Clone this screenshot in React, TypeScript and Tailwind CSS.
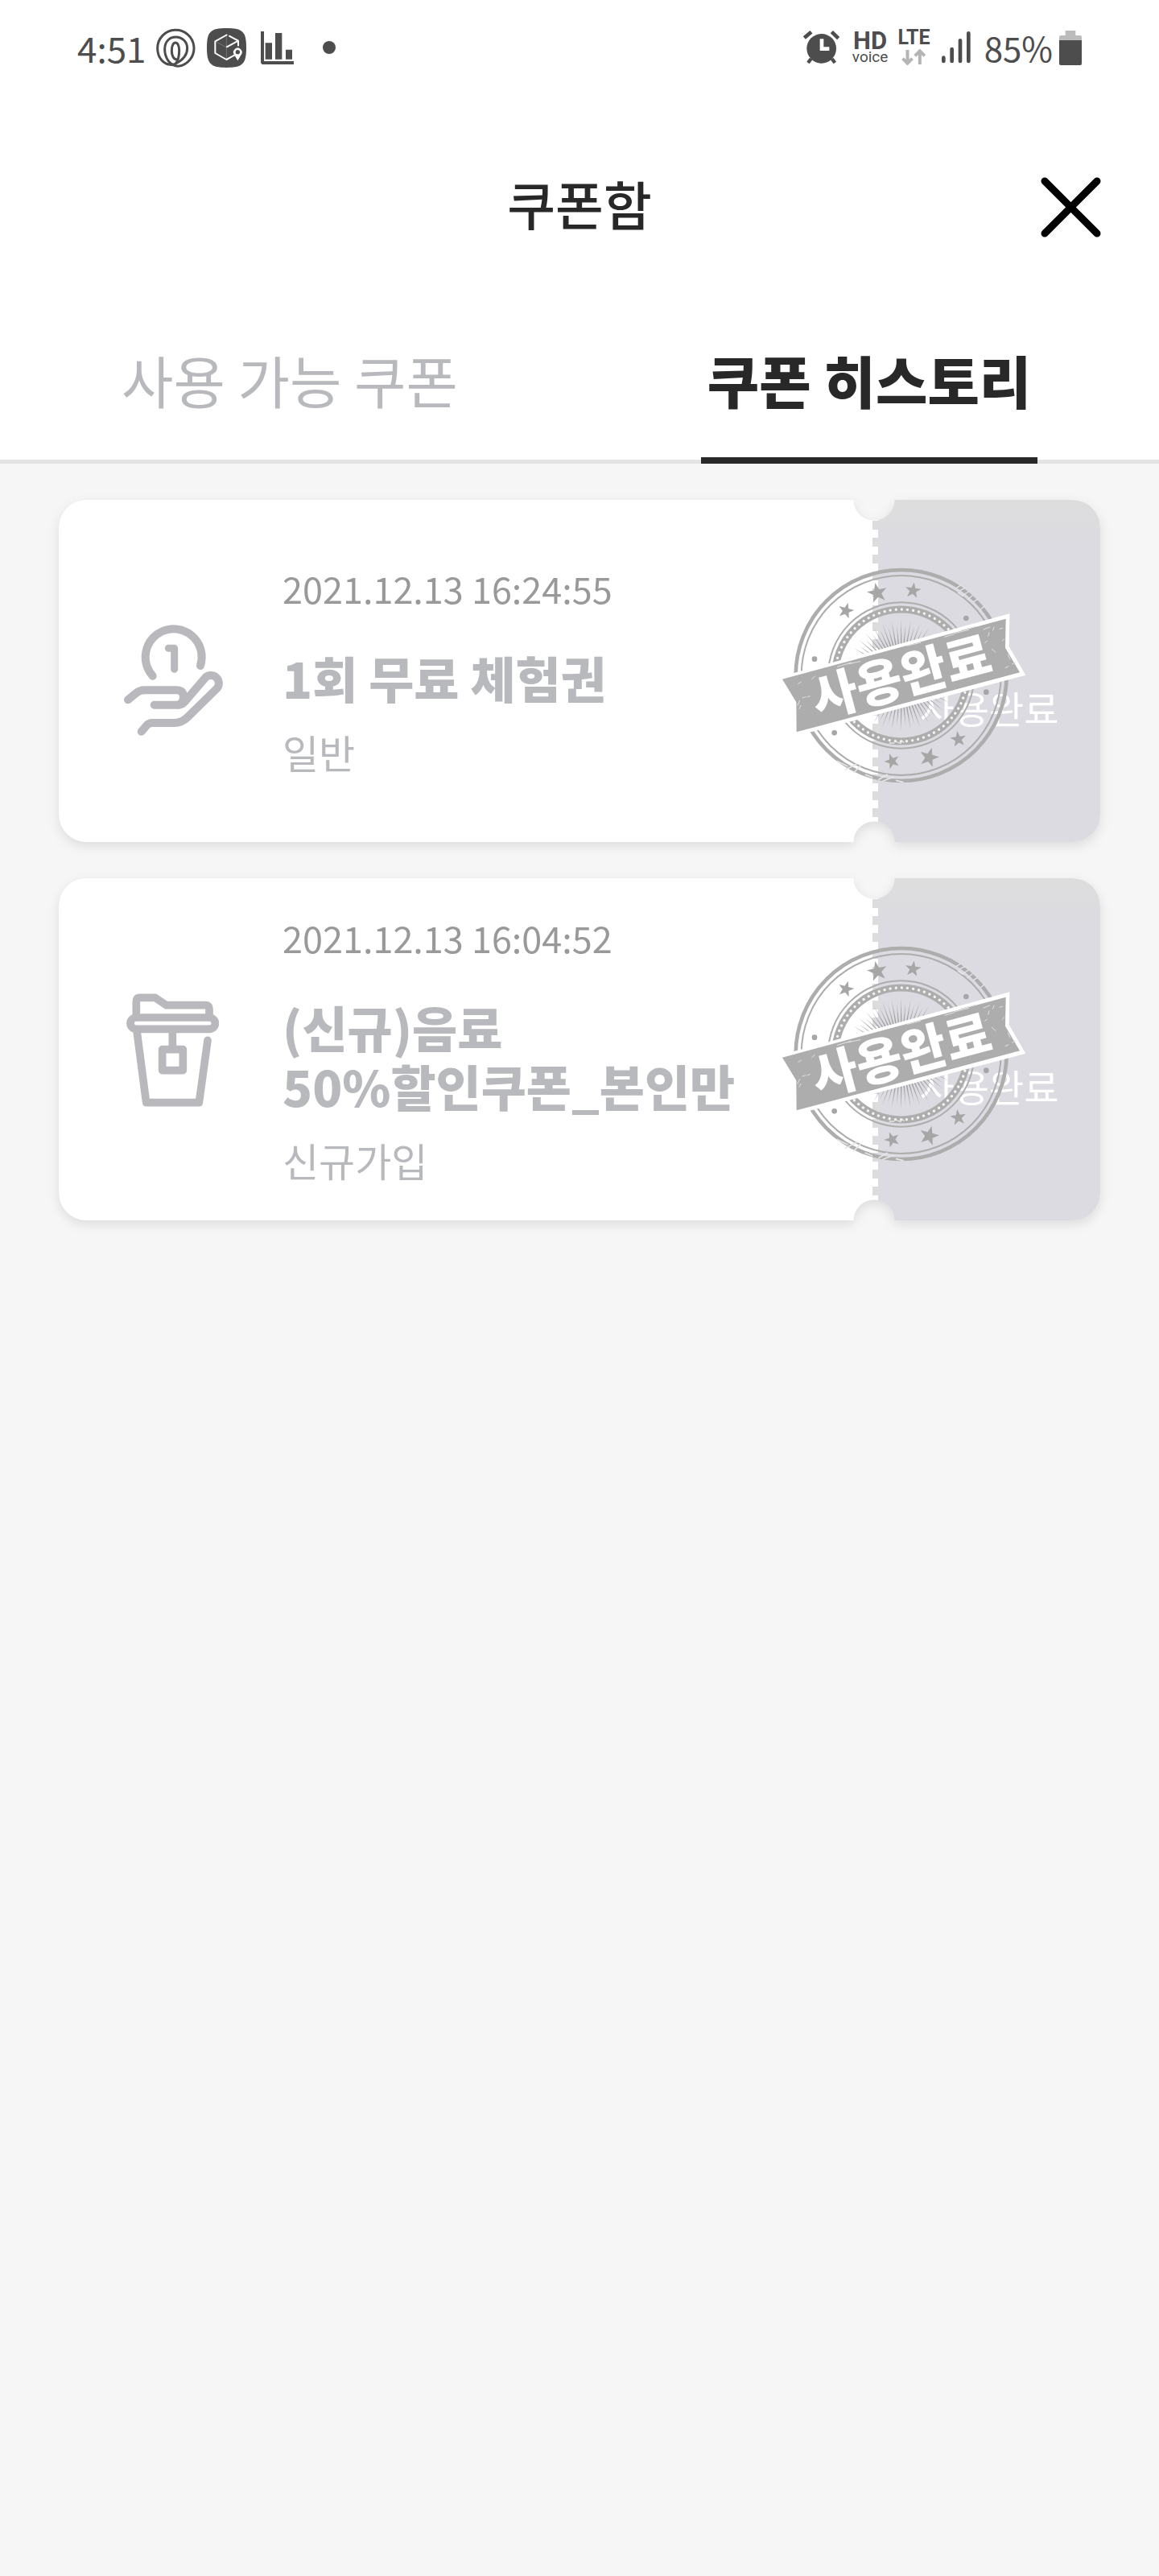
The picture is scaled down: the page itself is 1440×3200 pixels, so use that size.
import React from "react";

const INK = "#4d4d4d";

function SwirlIcon() {
  return (
    <svg aria-hidden="true" className="h-[49px] w-[49px]" viewBox="345 44 147 147" fill="none" stroke={INK} strokeWidth="9" strokeLinecap="round">
      <path d="M408 179 C372 184 350 152 350 118 A68 68 0 1 1 428 186 C396 184 377 155 377 122 C377 92 397 77 418 77 C445 77 461 97 461 119 C461 146 440 165 418 176 C406 182 396 181 388 178" />
      <path d="M418 176 C427 164 431 150 431 127 C431 88 403 88 403 127 C403 150 412 162 426 161" />
    </svg>
  );
}

function ParcelIcon() {
  return (
    <svg aria-hidden="true" className="h-[49px] w-[49px]" viewBox="534 45 147 147" fill="none" strokeLinejoin="round">
      <path d="M607 45 C668 45 681 58 681 118 C681 178 668 192 607 192 C547 192 534 178 534 118 C534 58 547 45 607 45 Z" fill={INK} />
      <path d="M570 97 L607 116 V160 M607 70 V116" stroke="#8a8a8a" strokeWidth="2" />
      <path d="M610 69 L565 94 V138 L607 162 L638 145 M616 73 L651 92 V112 M651 92 L607 116" stroke="#fff" strokeWidth="6" />
      <path d="M649 166 L636 144 A16 16 0 1 1 662 144 Z" fill="#fff" />
      <circle cx="649" cy="134" r="8" fill={INK} />
    </svg>
  );
}

function ChartIcon() {
  return (
    <svg aria-hidden="true" className="h-[41px] w-[41px]" viewBox="735 57 123 123" fill={INK}>
      <path d="M735 57 H747 V168 H858 V180 H745 Q735 180 735 170 Z" />
      <path d="M752 100 H777 V161 H752 Z M789 63 H814 V161 H789 Z M828 125 H852 V161 H828 Z" />
    </svg>
  );
}

function AlarmIcon() {
  return (
    <svg aria-hidden="true" className="h-[42px] w-[45px]" viewBox="55 53 135 126">
      <circle cx="123" cy="120" r="55" fill={INK} />
      <path d="M59 80 L85 58 M161 58 L186 82" stroke={INK} strokeWidth="14" />
      <path d="M84 158 L73 173 M162 158 L173 173" stroke={INK} strokeWidth="13" />
      <path d="M124 84 V121 H152" stroke="#fff" strokeWidth="14" fill="none" />
    </svg>
  );
}

function DataArrowsIcon() {
  return (
    <svg aria-hidden="true" className="h-[20px] w-[31px]" viewBox="417 127 92 60" fill="none" stroke="#b5b5b5" strokeWidth="12">
      <path d="M439 130 V180 M421 162 L439 180 L457 162 M485 184 V134 M467 152 L485 134 L503 152" />
    </svg>
  );
}

function SignalIcon() {
  return (
    <svg aria-hidden="true" className="h-[40px] w-[37px]" viewBox="566 60 111 120" stroke={INK} strokeWidth="14" strokeLinecap="round">
      <path d="M573 158 V171 M604 126 V171 M635 94 V171 M666 67 V171" />
    </svg>
  );
}

function BatteryIcon() {
  return (
    <svg aria-hidden="true" className="h-[43px] w-[28px]" viewBox="1008 51 84 129">
      <path d="M1031 51 H1069 V69 H1086 Q1092 69 1092 76 V90 H1008 V76 Q1008 69 1014 69 H1031 Z" fill="#bcbcbc" />
      <path d="M1008 87 H1092 V174 Q1092 180 1086 180 H1014 Q1008 180 1008 174 Z" fill={INK} />
    </svg>
  );
}

function StatusBar() {
  return (
    <div className="flex h-[118px] items-center justify-between px-24 text-[44px] leading-none text-[#4d4d4d]">
      <div className="flex items-center">
        <span className="mr-3">4:51</span>
        <SwirlIcon />
        <span className="ml-3.5 flex"><ParcelIcon /></span>
        <span className="ml-4.5 flex"><ChartIcon /></span>
        <span className="ml-9 h-4 w-4 rounded-full bg-[#4d4d4d]" />
      </div>
      <div className="flex items-center">
        <AlarmIcon />
        <div className="ml-4 flex flex-col items-center font-['Roboto',sans-serif]">
          <span className="text-[31px] leading-6 font-bold">HD</span>
          <span className="text-[19px] leading-4">voice</span>
        </div>
        <div className="ml-3 flex flex-col items-center gap-1 font-['Roboto',sans-serif]">
          <span className="text-[25px] leading-5 font-bold">LTE</span>
          <DataArrowsIcon />
        </div>
        <span className="ml-3.5 flex"><SignalIcon /></span>
        <span className="mr-2 ml-4 text-[42px]">85%</span>
        <BatteryIcon />
      </div>
    </div>
  );
}

function HandCoinIcon() {
  return (
    <svg aria-hidden="true" className="h-[170px] w-[150px] shrink-0" viewBox="0 -35 450 510" fill="none" stroke="#b9b9bd" strokeWidth="30" strokeLinecap="round" strokeLinejoin="round">
      <path d="M149 237 A105 105 0 1 1 327 199" />
      <path d="M208 134 H230 V212" strokeWidth="27" />
      <path d="M57 326 L85 303 Q100 290 118 290 H240 Q264 292 264 315 Q262 345 240 345 H155" />
      <path d="M245 345 Q258 345 268 334 L343 246 A29 29 0 0 1 389 283 L280 390 Q258 412 230 412 H147 Q134 412 125 423 L107 444" />
    </svg>
  );
}

function TeaCupIcon() {
  return (
    <svg aria-hidden="true" className="h-[170px] w-[150px] shrink-0" viewBox="0 25 450 510" fill="none" stroke="#b9b9bd" strokeWidth="29" strokeLinecap="round" strokeLinejoin="round">
      <path d="M88 155 V100 Q88 86 100 86 H158 L200 114 H347 Q360 114 360 128 V155" strokeLinecap="butt" strokeLinejoin="miter" />
      <rect x="66" y="160" width="316" height="43" rx="22" />
      <path d="M90 210 L125 477 H322 L354 245" />
      <path d="M223 210 V270" strokeLinecap="butt" />
      <rect x="185" y="279" width="77" height="78" />
    </svg>
  );
}

const STARS = [
  { x: 332, y: 447, r: 31, turn: 15 },
  { x: 449, y: 381, r: 39, turn: -12 },
  { x: 582, y: 372, r: 31, turn: 8 },
  { x: 504, y: 1008, r: 30, turn: -20 },
  { x: 642, y: 994, r: 38, turn: 15 },
  { x: 751, y: 926, r: 31, turn: -8 },
];

function starPoints(r: number) {
  return Array.from({ length: 10 }, (_, i) => {
    const radius = i % 2 ? r * 0.4 : r;
    const a = (Math.PI / 5) * i - Math.PI / 2;
    return `${(Math.cos(a) * radius).toFixed(1)},${(Math.sin(a) * radius).toFixed(1)}`;
  }).join(" ");
}

const RAYS = Array.from({ length: 72 }, (_, i) => {
  const a = (Math.PI / 36) * i;
  const c = Math.cos(a);
  const s = Math.sin(a);
  const tip = i % 2 ? 190 : 206;
  const w = 3.5;
  return `M${538 + c * tip} ${688 + s * tip} L${538 + c * 80 - s * w} ${688 + s * 80 + c * w} L${538 + c * 80 + s * w} ${688 + s * 80 - c * w} Z`;
}).join(" ");

function UsedStamp() {
  return (
    <svg role="img" aria-label="사용완료" className="absolute top-[82px] right-[90px] h-[273px] w-[310px]" viewBox="80 280 930 819">
      <g fill="none" stroke="#adadad">
        <circle cx="538" cy="688" r="393" strokeWidth="14" />
        <circle cx="538" cy="688" r="372" strokeWidth="6" />
        <circle cx="538" cy="688" r="272" strokeWidth="6" />
        <circle cx="538" cy="688" r="246" strokeWidth="27" />
      </g>
      <circle cx="538" cy="688" r="246" fill="none" stroke="#f4f4f4" strokeWidth="10" strokeLinecap="round" strokeDasharray="0.1 21.37" />
      <path d={RAYS} fill="#a3a3a3" />
      {STARS.map((s) => (
        <polygon key={s.x} points={starPoints(s.r)} transform={`translate(${s.x} ${s.y}) rotate(${s.turn})`} fill="#a6a6a6" />
      ))}
      <g fill="#a6a6a6">
        <circle cx="215" cy="627" r="10" />
        <circle cx="780" cy="475" r="10" />
        <circle cx="289" cy="902" r="10" />
        <circle cx="855" cy="750" r="10" />
      </g>
      <g stroke="#e6e6e8" fill="none" strokeLinecap="round">
        <path d="M744 362 L760 352 M757 372 L774 363 M768 388 L790 376 M785 405 L803 391 M808 413 L822 405 M836 440 L848 430 M750 380 L768 392" strokeWidth="4" />
        <path d="M300 1008 L338 1026 M330 1040 L372 1018 M362 1050 L385 1026 M455 1076 L486 1058 M470 1082 L510 1066 M520 1080 L545 1086 M405 1058 L430 1068" strokeWidth="5" />
        <path d="M495 940 H512 M518 934 L536 942 M540 930 L548 938" strokeWidth="4" />
      </g>
      <polygon points="84,694 942,458 940,580 1002,687 138,916 139,796" fill="#fff" />
      <polygon points="95,702 928,477 926,585 980,677 148,899 147,788" fill="#adadad" />
      <g stroke="#e2e2e2" fill="none" strokeWidth="3" strokeLinecap="round">
        <path d="M738 531 L790 518 M760 520 L815 506 M700 545 L736 534 M845 517 L868 508 M560 578 L610 566 M300 656 L352 640 M338 646 L385 636" />
        <path d="M152 800 L160 782 M158 812 L164 800 M170 772 L182 768 M188 768 L198 765 M154 720 L165 712 M205 702 L216 692" />
        <path d="M862 542 L866 528 M880 520 L884 508 M876 590 L890 602 M915 560 L922 552 M936 610 L944 628 M926 660 L938 654 M952 646 L964 640 M850 566 L858 560 M905 515 L915 512" />
      </g>
      <text x="538" y="761" transform="rotate(-15 538 692)" textAnchor="middle" fontSize="186" fontWeight="900" fill="#fff">
        사용완료
      </text>
    </svg>
  );
}

type Coupon = {
  date: string;
  title: string[];
  kind: string;
  icon: React.ReactNode;
};

const COUPONS: Coupon[] = [
  { date: "2021.12.13 16:24:55", title: ["1회 무료 체험권"], kind: "일반", icon: <HandCoinIcon /> },
  { date: "2021.12.13 16:04:52", title: ["(신규)음료", "50%할인쿠폰_본인만"], kind: "신규가입", icon: <TeaCupIcon /> },
];

function CouponCard({ coupon }: { coupon: Coupon }) {
  return (
    <li className="relative drop-shadow-[0_5px_7px_rgba(0,0,0,0.1)]">
      <div className="flex min-h-[425px] overflow-hidden rounded-[34px] bg-white [mask-composite:intersect] [mask-image:radial-gradient(circle_at_right_281px_top_0px,transparent_25px,black_26px),radial-gradient(circle_at_right_281px_bottom_0px,transparent_25px,black_26px)]">
        <div className="flex flex-1 items-center pl-[67px]">
          {coupon.icon}
          <div className="ml-[61px] flex flex-col pb-1">
            <time className="text-[45px] leading-[60px] text-[#999999]">{coupon.date}</time>
            <h2 className="mt-11 text-[61px] leading-[73px] font-black text-[#b8b9bd]">
              {coupon.title.map((line) => (
                <span key={line} className="block">{line}</span>
              ))}
            </h2>
            <p className="mt-7 text-[49px] leading-[56px] text-[#b8b9bd]">{coupon.kind}</p>
          </div>
        </div>
        <div className="w-[7px] bg-[repeating-linear-gradient(to_bottom,#dcdcdc_0px,#dcdcdc_11px,#ffffff_11px,#ffffff_21px)] bg-[position:0_5px]" />
        <div className="flex w-[276px] items-center justify-center bg-[linear-gradient(to_bottom,#dddddd_0%,#dcdbe1_14%)] pt-[90px]">
          <span className="text-[47px] leading-none text-white">사용완료</span>
        </div>
      </div>
      <UsedStamp />
    </li>
  );
}

export default function App() {
  return (
    <div className="flex min-h-screen flex-col bg-[#f6f6f6] font-['Noto_Sans_CJK_KR',sans-serif]">
      <div className="bg-white">
        <StatusBar />
        <header className="grid h-[278px] grid-cols-[1fr_auto_1fr] items-center px-[72px]">
          <span />
          <h1 className="pb-2.5 text-[65px] leading-none font-medium text-[#282828]">쿠폰함</h1>
          <button type="button" aria-label="닫기" className="cursor-pointer justify-self-end">
            <svg aria-hidden="true" className="h-[75px] w-[75px]" viewBox="0 0 75 75" stroke="#000" strokeWidth="9" strokeLinecap="round">
              <path d="M5 5 L70 70 M70 5 L5 70" />
            </svg>
          </button>
        </header>
        <div role="tablist" className="grid h-[180px] grid-cols-2 border-b-5 border-[#e4e4e4] text-[70px] leading-none">
          <button type="button" role="tab" aria-selected="false" className="cursor-pointer pb-6 text-[#b8b9bd]">
            사용 가능 쿠폰
          </button>
          <button type="button" role="tab" aria-selected="true" className="-mb-[5px] flex cursor-pointer items-center justify-self-center border-b-8 border-[#282828] px-2 pb-5 font-black text-[#282828]">
            쿠폰 히스토리
          </button>
        </div>
      </div>
      <ul className="flex flex-col gap-[45px] px-[73px] pt-[45px]">
        {COUPONS.map((coupon) => (
          <CouponCard key={coupon.date} coupon={coupon} />
        ))}
      </ul>
    </div>
  );
}
